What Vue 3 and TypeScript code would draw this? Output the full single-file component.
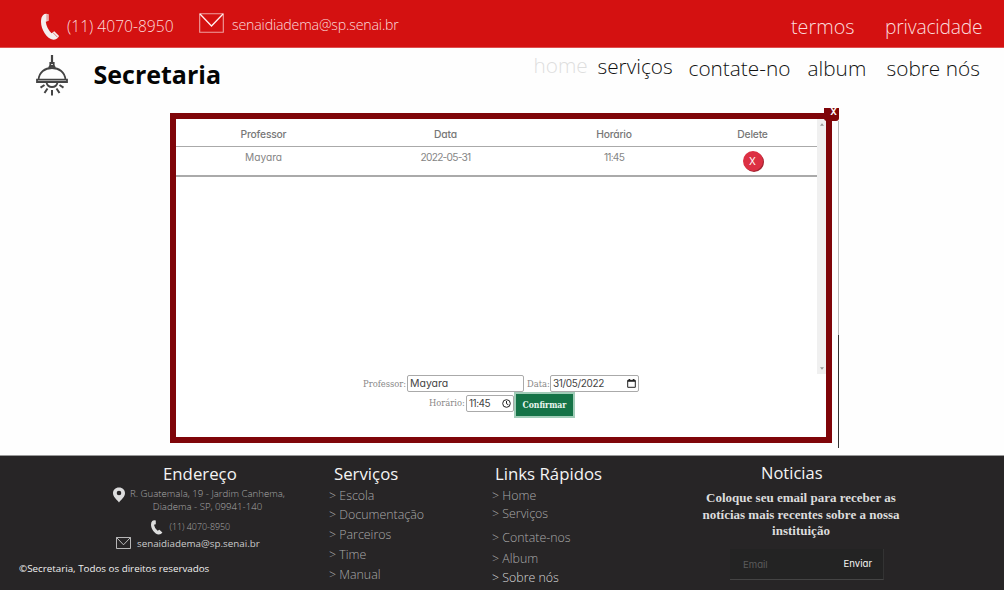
<script setup lang="ts">
interface Label {
  text: string
  cls: string
}

const navigation: Label[] = [
  { text: 'home', cls: 'home' },
  { text: 'serviços', cls: 'services' },
  { text: 'contate-no', cls: 'contact' },
  { text: 'album', cls: 'album' },
  { text: 'sobre nós', cls: 'about' },
]
const services: Label[] = [
  { text: 'Escola', cls: '' },
  { text: 'Documentação', cls: 'gap1' },
  { text: 'Parceiros', cls: 'gap2' },
  { text: 'Time', cls: 'gap2' },
  { text: 'Manual', cls: 'gap2' },
]
const quickLinks: Label[] = [
  { text: 'Home', cls: '' },
  { text: 'Serviços', cls: '' },
  { text: 'Contate-nos', cls: 'gap6' },
  { text: 'Album', cls: 'gap3' },
  { text: 'Sobre nós', cls: 'gap1 bright' },
]
</script>

<template>
  <div class="page">
    <div class="topbar">
      <svg class="phone" viewBox="0 0 20 29"><path d="M2 2Q4 0 8 1V8L5 9Q6 16 11 21L14 19L19 24Q17 28 13 28C6 27 0 17 0 9Q0 4 2 2Z" /><path class="cut" d="M6.4 1V8M12.5 20.3L17.5 25.4" /></svg>
      <span class="tel">(11) 4070-8950</span>
      <svg class="mail" viewBox="0 0 25 20"><path d="M.7.7H24.3V19.3H.7Z" /><path class="flap" d="M1 1L12.5 13L24 1" /></svg>
      <span class="address">senaidiadema@sp.senai.br</span>
      <span class="terms">termos</span>
      <span class="privacy">privacidade</span>
    </div>
    <header>
      <svg class="lamp" viewBox="0 0 32 42">
        <path class="cord" d="M16 1V9" />
        <path d="M14.3 9H17.7V12H14.3ZM13 14L14 12H18L19 14M2.5 26C3 18 9 14 16 14S29 18 29.5 26M1 25.6H31V28H1ZM10.5 28.5Q11.5 33 16 33T21.5 28.5" />
        <path class="rays" d="M8.5 31L4.5 33.6M11.5 34.5L8.5 39M16 36V41.5M20.5 34.5L23.5 39M23.5 31L27.5 33.6" />
      </svg>
      <h1>Secretaria</h1>
      <nav><a v-for="n in navigation" :key="n.text" :class="n.cls">{{ n.text }}</a></nav>
    </header>

    <main>
      <section class="dialog">
        <div class="list">
          <div class="records">
            <div class="row head"><span>Professor</span><span>Data</span><span>Horário</span><span>Delete</span></div>
            <div class="row entry"><span>Mayara</span><span class="tight">2022-05-31</span><span class="tight">11:45</span><span><button class="delete">X</button></span></div>
          </div>
          <div class="scroll"><svg viewBox="0 0 6 4"><path d="M3 0L6 4H0Z" /></svg><svg viewBox="0 0 6 4"><path d="M0 0H6L3 4Z" /></svg></div>
        </div>
        <div class="form first">
          <label class="l-prof">Professor:</label><div class="field name">Mayara</div>
          <label class="l-date">Data:</label>
          <div class="field date"><span>31/05/2022</span><svg viewBox="0 0 9 9"><path d="M.7 1.4H8.3V8.3H.7Z" /><path class="thick" d="M.7 2H8.3M2.4 0V2M6.6 0V2" /></svg></div>
        </div>
        <div class="form second">
          <label class="l-time">Horário:</label>
          <div class="field time"><span>11:45</span><svg viewBox="0 0 9 9"><circle cx="4.5" cy="4.5" r="3.8" /><path d="M4.5 2V4.7L6.4 5.8" /></svg></div>
          <button class="confirm">Confirmar</button>
        </div>
      </section>
      <div class="close"><span>X</span></div>
      <div class="rail"></div>
    </main>

    <footer>
      <section class="col-address">
        <h2>Endereço</h2>
        <div class="place">
          <svg viewBox="0 0 13 16"><path fill-rule="evenodd" d="M6.5 0C10.5 0 13 2.7 13 6.2C13 10 9 13 6.5 16C4 13 0 10 0 6.2C0 2.7 2.5 0 6.5 0ZM6.5 3.4A2.5 2.5 0 1 0 6.5 8.4A2.5 2.5 0 1 0 6.5 3.4Z" /></svg>
          <p><span class="street">R. Guatemala, 19 - Jardim Canhema,</span><span class="city">Diadema - SP, 09941-140</span></p>
        </div>
        <div class="foot-tel">
          <svg viewBox="0 0 20 29" preserveAspectRatio="none"><path d="M2 2Q4 0 8 1V8L5 9Q6 16 11 21L14 19L19 24Q17 28 13 28C6 27 0 17 0 9Q0 4 2 2Z" /></svg>
          <span>(11) 4070-8950</span>
        </div>
        <div class="foot-mail">
          <svg viewBox="0 0 25 20" preserveAspectRatio="none"><path d="M.8.8H24.2V19.2H.8ZM1 1L12.5 13L24 1" /></svg>
          <span>senaidiadema@sp.senai.br</span>
        </div>
        <p class="copyright">©Secretaria, Todos os direitos reservados</p>
      </section>
      <section class="col-services">
        <h2>Serviços</h2>
        <ul><li v-for="s in services" :key="s.text" :class="s.cls">&gt; {{ s.text }}</li></ul>
      </section>
      <section class="col-links">
        <h2>Links Rápidos</h2>
        <ul><li v-for="q in quickLinks" :key="q.text" :class="q.cls">&gt; {{ q.text }}</li></ul>
      </section>
      <section class="col-news">
        <h2>Noticias</h2>
        <p class="blurb"><span>Coloque seu email para receber as</span><span>notícias mais recentes sobre a nossa</span><span>instituição</span></p>
        <div class="subscribe"><span class="email">Email</span><span class="send">Enviar</span></div>
      </section>
    </footer>
  </div>
</template>

<style>
html, body { margin: 0; overflow: hidden; background: #fefefe; }
</style>

<style scoped>
* { box-sizing: border-box; }
h1, h2, p, ul { margin: 0; padding: 0; }
button { font: inherit; border: 0; padding: 0; }
.page { width: 1004px; height: 590px; overflow: hidden; background: #fefefe; font-family: "Open Sans", sans-serif; white-space: nowrap; display: flex; flex-direction: column; }
svg { display: block; flex: none; }

.topbar { height: 48px; flex: none; background: #d41111; border-bottom: 1px solid #df5050; display: flex; align-items: flex-start; color: #fbdcdc; font-weight: 300; }
.topbar span { height: 30px; line-height: 30px; }
.phone { width: 19px; height: 28px; margin: 13px 0 0 41px; fill: #f4eeee; }
.phone .cut { fill: none; stroke: #d41111; stroke-width: .6; }
.tel { width: 107px; margin: 11px 0 0 7px; font-size: 15.6px; }
.mail { width: 25px; height: 20px; margin: 13px 0 0 25px; fill: none; stroke: #f0a0a0; stroke-width: 1.1; }
.mail .flap { stroke: #fff0f0; stroke-width: 1.3; }
.address { width: 168px; margin: 10px 0 0 8px; font-size: 14.2px; letter-spacing: -.17px; }
.terms { width: 64px; margin: 12px 0 0 391px; font-size: 19.8px; }
.privacy { margin: 12px 0 0 30px; font-size: 19.3px; letter-spacing: -.2px; }

header { height: 60px; flex: none; display: flex; align-items: flex-start; }
.lamp { width: 32px; height: 42px; margin: 6px 0 0 36px; fill: none; stroke: #444; stroke-width: 1.8; }
.lamp .cord { stroke-width: 2.2; }
.lamp .rays { stroke-width: 2; }
h1 { width: 128px; margin: 9px 0 0 25.5px; font-size: 25px; line-height: 34px; color: #050505; }
nav { display: flex; margin-left: 312px; font-size: 20.8px; line-height: 30px; font-weight: 300; color: #111; }
nav a { height: 30px; }
.home { width: 54px; margin-top: 2px; color: #dedede; }
.services { width: 76px; margin: 3px 0 0 10px; }
.contact { width: 102px; margin: 5px 0 0 15px; }
.album { width: 59px; margin: 5px 0 0 17px; }
.about { margin: 5px 0 0 20px; }

main { position: relative; height: 347px; flex: none; padding: 5px 0 0 170px; font-family: Inter, sans-serif; font-feature-settings: "cv11"; }
.dialog { width: 662px; height: 330px; border: 6px solid #7f0509; background: #fff; }
.list { display: flex; height: 255px; }
.records { width: 641px; }
.row { display: grid; grid-template-columns: 175px 189px 148px 129px; text-align: center; color: #777; font-size: 10.3px; }
.head { height: 28px; line-height: 30px; font-weight: 500; letter-spacing: -.2px; border-bottom: 1px solid #aaa; }
.entry { height: 30px; line-height: 21px; font-size: 10.2px; border-bottom: 2px solid #aaa; color: #858585; }
.tight { letter-spacing: -.75px; }
.delete { display: block; width: 20px; height: 20px; margin: 4px auto 0; border-radius: 50%; background: #dc3043; box-shadow: 1px 1px 0 #a32431; color: #fff; font-size: 10px; line-height: 19px; }
.scroll { width: 9px; background: #f0f0f0; display: flex; flex-direction: column; justify-content: space-between; align-items: center; padding: 4px 0; }
.scroll svg { width: 4px; height: 3px; fill: #999; }
.form { display: flex; align-items: flex-start; }
label { font-family: "DejaVu Serif Condensed", "DejaVu Serif", serif; color: #888; font-size: 9.3px; line-height: 17px; }
.first { padding: 1px 0 0 187px; }
.l-prof { width: 44px; }
.field { height: 17px; border: 1px solid #aaa; border-radius: 2px; color: #444; font-size: 10px; line-height: 15px; padding-left: 2px; display: flex; justify-content: space-between; }
.field svg { width: 9px; height: 9px; margin: 3px 2px 0 0; fill: none; stroke: #222; stroke-width: 1; }
.field .thick { stroke-width: 1.7; }
.name { width: 117px; font-size: 10.5px; }
.l-date { width: 23px; margin-left: 3px; }
.date { width: 89px; }
.date span { letter-spacing: -.35px; }
.second { padding-left: 253px; margin-top: 1px; }
.l-time { width: 37px; margin-top: 1px; }
.time { width: 48px; margin-top: 2px; }
.time span { letter-spacing: -.5px; }
.confirm { width: 61px; height: 26px; margin: -1px 0 0; background: #157347; border: 2px solid #a1cdb8; color: #eaf5ef; font-family: "DejaVu Serif Condensed", "DejaVu Serif", serif; font-weight: 700; font-size: 8.6px; line-height: 22px; }
.close { position: absolute; left: 824px; top: 0; width: 15px; height: 13px; background: #7f0509; border-radius: 0 0 3px 3px; color: #fff; font-size: 9px; font-weight: 700; text-align: center; line-height: 7px; padding-left: 4px; }
.rail { position: absolute; left: 838px; top: 13px; width: 1px; height: 327px; background: linear-gradient(#bbb 0 214px, #333 214px); }

footer { height: 135px; flex: none; background: #272526; border-top: 1px solid #999; display: flex; color: #aaa; font-weight: 300; }
h2 { font-weight: 400; font-size: 16.8px; line-height: 24px; height: 24px; color: #f4f4f4; }
.col-address { width: 329px; padding-top: 6px; }
.col-address h2 { padding-left: 163px; }
.place { display: flex; padding: 1px 0 0 113px; }
.place svg { width: 12px; height: 16px; fill: #ddd; }
.place p { width: 156px; margin: 0 0 0 4.5px; display: flex; flex-direction: column; align-items: center; font-size: 9.65px; line-height: 13px; }
.foot-tel { display: flex; padding: 7px 0 0 151px; font-size: 8.9px; line-height: 13px; }
.foot-tel svg { width: 12px; height: 15px; fill: #ddd; }
.foot-tel span { margin-left: 6.5px; }
.foot-mail { display: flex; padding: 1px 0 0 116px; font-size: 9.8px; line-height: 14px; font-weight: 400; color: #ccc; }
.foot-mail svg { width: 15px; height: 12px; margin-top: 1px; fill: none; stroke: #ccc; stroke-width: 1.5; }
.foot-mail span { margin: 1px 0 0 6px; }
.copyright { margin: 11px 0 0 19px; font-size: 9.8px; line-height: 14px; font-weight: 400; color: #f0f0f0; }
.col-services { width: 163px; padding-top: 6px; }
.col-services h2 { padding-left: 5px; }
.col-links { width: 192px; padding-top: 6px; }
.col-links h2 { padding-left: 3px; }
ul { list-style: none; padding-top: 1px; font-size: 12.4px; line-height: 18px; }
li { height: 18px; }
.gap1 { margin-top: 1px; }
.gap2 { margin-top: 2px; }
.gap3 { margin-top: 3px; }
.gap6 { margin-top: 6px; }
.bright { color: #d8d8d8; }
.col-news { width: 234px; padding-top: 5px; }
.col-news h2 { padding-left: 77px; font-size: 16.5px; }
.blurb { display: flex; flex-direction: column; align-items: center; margin: 5px 0 0 16px; width: 202px; font-family: "Liberation Serif", serif; font-weight: 700; font-size: 13px; line-height: 16.5px; color: #dcdcdc; }
.subscribe { width: 154px; height: 31px; margin: 9px 0 0 46px; display: flex; justify-content: space-between; padding: 0 11px 0 13px; background: #232323; border-bottom: 1px solid #444; border-right: 1px solid #333; font-family: Inter, sans-serif; font-feature-settings: "cv11"; font-size: 9.6px; line-height: 29px; font-weight: 400; }
.email { color: #5c5c5c; padding-top: 1px; }
.send { color: #f5f5f5; }
</style>
